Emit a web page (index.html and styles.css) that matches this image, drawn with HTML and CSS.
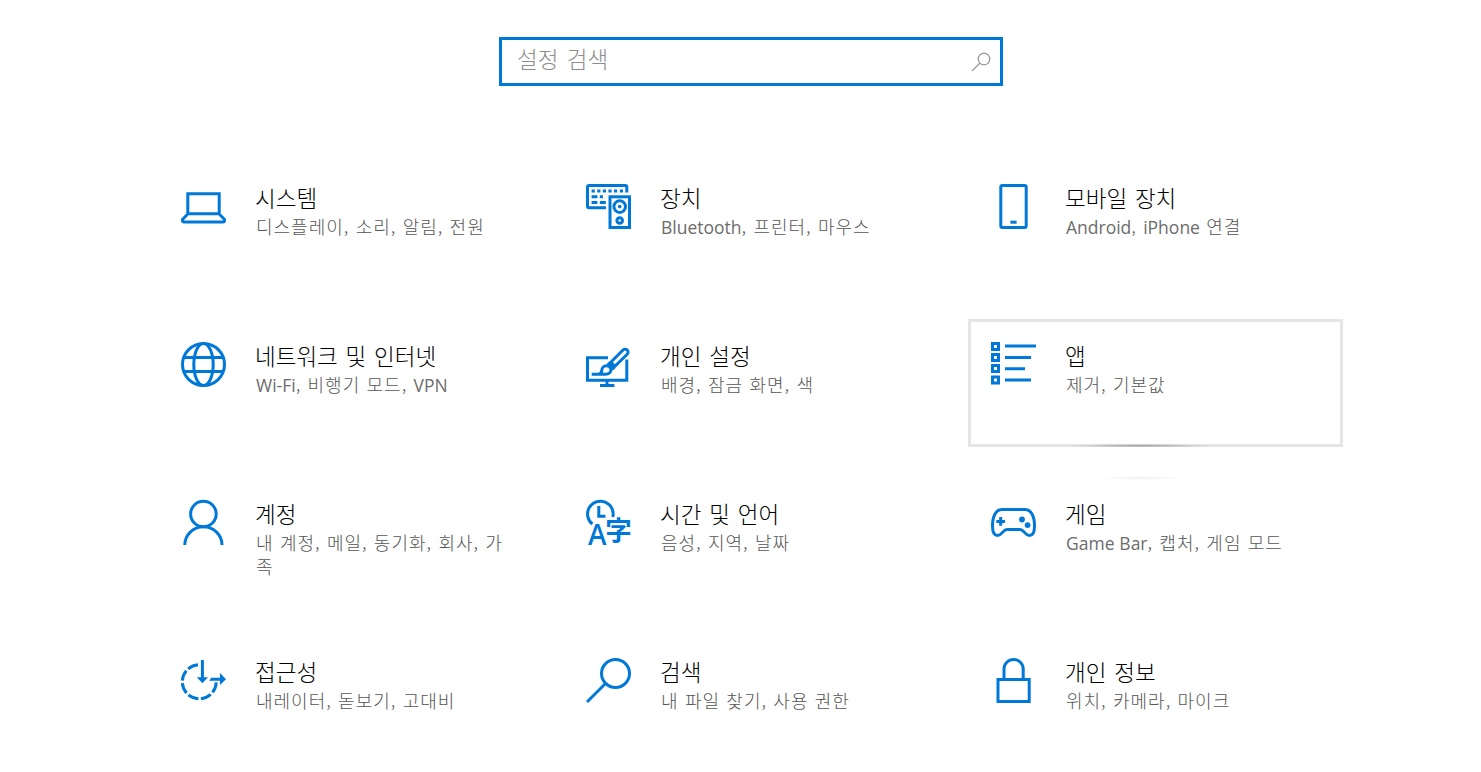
FILE: index.html
```
<!DOCTYPE html>
<html lang="ko">
<head>
    <meta charset="utf-8" />
    <title>설정</title>
    <link rel="stylesheet" href="styles.css">
</head>
<body>
    <div class="search">
        <input type="text" placeholder="설정 검색" />
        <svg class="search-icon" viewBox="0 0 20 20"><circle cx="13" cy="7" r="5.8" /><path d="M8.8 11.2L1 19" /></svg>
    </div>

    <div class="grid">
        <div class="tile">
            <svg class="icon" viewBox="0 0 45 45">
                <path d="M6.8 29V9.8h31.4V29M5.5 29.7h34M7 29.7l-5.5 5.8v1q0 1.5 1.5 1.5h39q1.5 0 1.5-1.5v-1L38 29.7" />
            </svg>
            <div class="text">
                <div class="title">시스템</div>
                <div class="desc">디스플레이, 소리, 알림, 전원</div>
            </div>
        </div>
        <div class="tile">
            <svg class="icon" viewBox="0 0 45 45">
                <path d="M20 23.8H3Q1.5 23.8 1.5 22.3V3Q1.5 1.5 3 1.5H39.3Q40.8 1.5 40.8 3V8.5" />
                <path d="M5.6 7h3.2M11.2 7h3.2M16.8 7h3.2M22.4 7h3.2M28 7h3.2M33.8 7h3.2M5.6 12.8h5.8M13.8 12.8h3.2M5.6 18.4h5.8M13.8 18.4h6" />
                <rect x="24" y="12.8" width="19.5" height="30.7" />
                <circle cx="33.7" cy="22.6" r="5.8" />
                <circle class="fill" cx="33.7" cy="22.6" r="1.8" />
                <circle cx="33.7" cy="36.5" r="2.8" />
            </svg>
            <div class="text">
                <div class="title">장치</div>
                <div class="desc"><span class="en">Bluetooth</span>, 프린터, 마우스</div>
            </div>
        </div>
        <div class="tile">
            <svg class="icon" viewBox="0 0 45 45">
                <rect x="9.8" y="1.5" width="25.4" height="42" rx="1.5" />
                <path d="M19.4 38.2h6.2" />
            </svg>
            <div class="text">
                <div class="title">모바일 장치</div>
                <div class="desc"><span class="en">Android</span>, <span class="en">iPhone</span> 연결</div>
            </div>
        </div>

        <div class="tile">
            <svg class="icon" viewBox="0 0 45 45">
                <circle cx="22.5" cy="22.5" r="21" />
                <ellipse cx="22.5" cy="22.5" rx="9.7" ry="21" />
                <path d="M3 15.5h39M3 29.5h39" />
            </svg>
            <div class="text">
                <div class="title">네트워크 및 인터넷</div>
                <div class="desc"><span class="en">Wi-Fi</span>, 비행기 모드, <span class="en">VPN</span></div>
            </div>
        </div>
        <div class="tile">
            <svg class="icon" viewBox="0 0 45 45">
                <path d="M22 15.7H1.5V38.2H40.8V17.5M21 38v5M14 43.5h14.4" />
                <path d="M24.8 20.2L37 8a2.9 2.9 0 0 1 4.2 4.2L28.8 24.4zM24.8 20.2L21.6 23.6M28.8 24.4L25.4 27.4M22 20.5l6.5 6.5" />
                <path d="M5.7 32.3H19.5C23 32.3 25 30.2 25 27.5 24.5 24.8 22.5 23.8 20.5 23.8 17.5 23.8 15.8 26 15.8 28.3Q15.8 31 13 32.3" />
            </svg>
            <div class="text">
                <div class="title">개인 설정</div>
                <div class="desc">배경, 잠금 화면, 색</div>
            </div>
        </div>
        <div class="tile hover">
            <svg class="icon" viewBox="0 0 45 45">
                <path d="M1.5 1.5h6v6h-6zM1.5 12.5h6v6h-6zM1.5 23.5h6v6h-6zM1.5 35h6v6h-6z" />
                <path d="M14 4h31M14 15.5h26M14 26.7h20M14 38h26" />
            </svg>
            <div class="text">
                <div class="title">앱</div>
                <div class="desc">제거, 기본값</div>
            </div>
        </div>

        <div class="tile">
            <svg class="icon" viewBox="0 0 45 45">
                <circle cx="22.4" cy="14" r="12.8" />
                <path d="M3.8 45a18.6 18.2 0 0 1 37.2 0" />
            </svg>
            <div class="text">
                <div class="title">계정</div>
                <div class="desc">내 계정, 메일, 동기화, 회사, 가족</div>
            </div>
        </div>
        <div class="tile">
            <svg class="icon" viewBox="0 0 45 45">
                <path d="M6.4 24A12.8 12.8 0 1 1 26.8 17" />
                <path d="M12.8 6V16.2H19.5" />
                <text class="latin" x="2" y="45" font-size="28.5" textLength="18.5" lengthAdjust="spacingAndGlyphs">A</text>
                <text x="19.3" y="40" font-size="26.5">字</text>
            </svg>
            <div class="text">
                <div class="title">시간 및 언어</div>
                <div class="desc">음성, 지역, 날짜</div>
            </div>
        </div>
        <div class="tile near">
            <svg class="icon" viewBox="0 0 45 45">
                <path d="M11 9.5H34C40 9.5 43.5 16 43.5 26 43.5 32 42 35.5 38.5 35.5 34 35.5 33 29.5 29 29.5H16C12 29.5 11 35.5 6.5 35.5 3 35.5 1.5 32 1.5 26 1.5 16 5 9.5 11 9.5ZM9.7 17v8.8M5.3 21.4h8.8" />
                <circle class="fill" cx="31" cy="19.5" r="2.9" />
                <circle class="fill" cx="36.6" cy="25.1" r="2.9" />
            </svg>
            <div class="text">
                <div class="title">게임</div>
                <div class="desc"><span class="en">Game Bar</span>, 캡처, 게임 모드</div>
            </div>
        </div>

        <div class="tile">
            <svg class="icon" viewBox="0 0 45 45">
                <path stroke-dasharray="10.8 2.55" stroke-dashoffset="-1.3" d="M18.3 6.7A17 17 0 1 0 35.3 23.7" />
                <path d="M21.4 2V20M30 21.2H40" />
                <path class="fill" d="M15.8 19.3H27L21.4 25.3zM39 15L45 21.2 39 27zM30.5 19.7V22.7H28z" />
            </svg>
            <div class="text">
                <div class="title">접근성</div>
                <div class="desc">내레이터, 돋보기, 고대비</div>
            </div>
        </div>
        <div class="tile">
            <svg class="icon" viewBox="0 0 45 45">
                <circle cx="29.5" cy="15.5" r="14" />
                <path d="M19.5 25.5L1 44" />
            </svg>
            <div class="text">
                <div class="title">검색</div>
                <div class="desc">내 파일 찾기, 사용 권한</div>
            </div>
        </div>
        <div class="tile">
            <svg class="icon" viewBox="0 0 45 45">
                <rect x="7" y="21.5" width="31.2" height="22" />
                <path d="M13 21V11a9.6 9.6 0 0 1 19.2 0V21" />
            </svg>
            <div class="text">
                <div class="title">개인 정보</div>
                <div class="desc">위치, 카메라, 마이크</div>
            </div>
        </div>
    </div>
</body>
</html>
```
FILE: styles.css
```
* { box-sizing: border-box; }
body { margin: 0; background: #fff; color: #000; font-family: "Noto Sans CJK KR", sans-serif; font-weight: 300; overflow: hidden; }

.search { display: flex; align-items: center; width: 504px; height: 49px; margin: 37px 0 0 499px; border: 3px solid #0078d7; padding: 0 9px 0 15px; }
.search input { flex: 1; min-width: 0; height: 43px; padding: 0 0 7px; border: 0; outline: 0; background: none; font: inherit; font-size: 22.5px; word-spacing: 2px; }
.search input::placeholder { color: #8c8c8c; opacity: 1; }
.search-icon { width: 20px; height: 20px; fill: none; stroke: #999; stroke-width: 1.3; }

.grid { display: grid; grid-template-columns: repeat(3, 375px); grid-auto-rows: 128px; gap: 30px; margin: 75px 0 0 158px; }
.tile { position: relative; display: flex; gap: 29px; padding: 20px; border: 3px solid transparent; }
.tile.hover { border-color: #e5e5e5; }
/* reveal light under the pointer */
.tile.hover::after { content: ""; position: absolute; left: 100px; bottom: -3px; width: 138px; height: 3px; background: radial-gradient(ellipse at 50% 60%, #a4a4a4, #e5e5e5 75%); }
.tile.near::after { content: ""; position: absolute; left: 127px; top: -3px; width: 86px; height: 3px; background: radial-gradient(ellipse at 50% 30%, #eee, #fff 70%); }

.icon { flex: none; width: 45px; height: 45px; overflow: visible; fill: none; stroke: #0078d7; stroke-width: 3; }
.icon .fill { fill: #0078d7; stroke: none; }
.icon text { fill: #0078d7; stroke: none; font-family: "Noto Sans CJK KR", sans-serif; font-weight: 700; }
.icon .latin { font-family: "Open Sans", sans-serif; font-weight: 600; }

.text { width: 257px; margin-top: -2px; }
.title { height: 30px; line-height: 30px; font-size: 22.5px; word-spacing: 1.5px; }
.desc { margin: 2px 0 0 1px; line-height: 24px; font-size: 18px; letter-spacing: 1px; word-spacing: .3px; color: #555; }
.en { font-family: "Open Sans", sans-serif; font-size: 17.5px; font-weight: 400; letter-spacing: 0; color: #6c6c6c; }
```
